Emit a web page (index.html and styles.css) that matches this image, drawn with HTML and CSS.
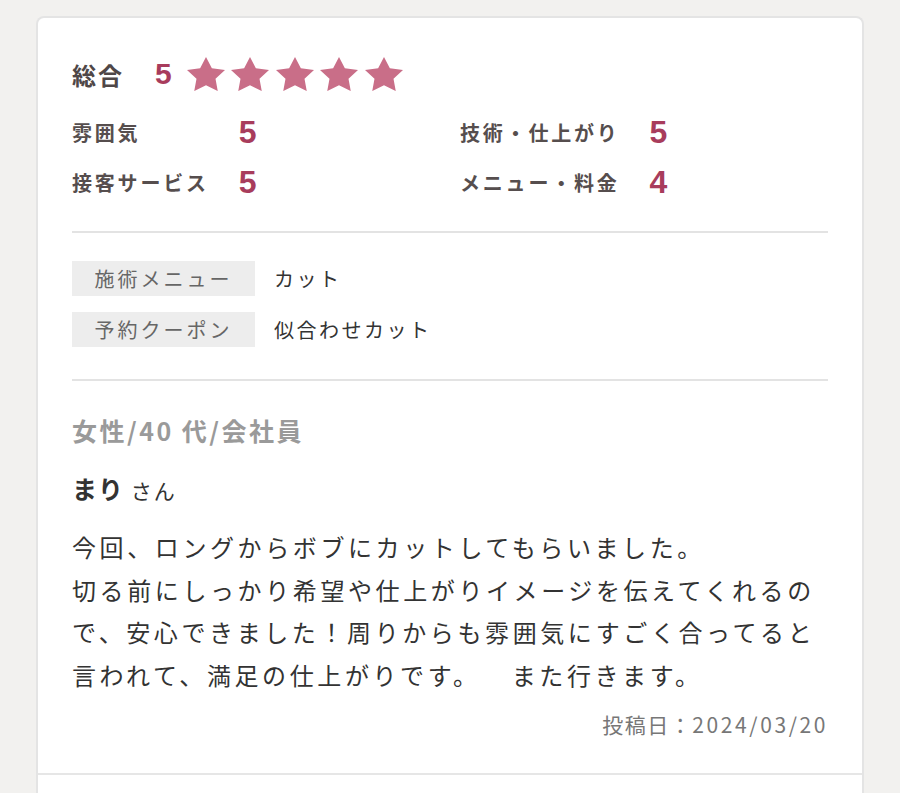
FILE: index.html
```html
<!DOCTYPE html>
<html lang="ja">
<head>
  <meta charset="UTF-8" />
  <meta name="viewport" content="width=device-width, initial-scale=1.0"/>
  <title>口コミ</title>
  <link rel="stylesheet" href="styles.css">
</head>
<body>
  <div class="review-list">
    <div class="review">
      <div class="ratings">
        <div class="overall">
          <span class="overall-label">総合</span>
          <span class="overall-score">5</span>
          <span class="stars">
            <svg class="star" viewBox="2 2 20 19" preserveAspectRatio="none"><path d="M12 2l3.09 6.26L22 9.27l-5 4.87 1.18 6.88L12 17.77l-6.18 3.25L7 14.14 2 9.27l6.91-1.01z"/></svg>
            <svg class="star" viewBox="2 2 20 19" preserveAspectRatio="none"><path d="M12 2l3.09 6.26L22 9.27l-5 4.87 1.18 6.88L12 17.77l-6.18 3.25L7 14.14 2 9.27l6.91-1.01z"/></svg>
            <svg class="star" viewBox="2 2 20 19" preserveAspectRatio="none"><path d="M12 2l3.09 6.26L22 9.27l-5 4.87 1.18 6.88L12 17.77l-6.18 3.25L7 14.14 2 9.27l6.91-1.01z"/></svg>
            <svg class="star" viewBox="2 2 20 19" preserveAspectRatio="none"><path d="M12 2l3.09 6.26L22 9.27l-5 4.87 1.18 6.88L12 17.77l-6.18 3.25L7 14.14 2 9.27l6.91-1.01z"/></svg>
            <svg class="star" viewBox="2 2 20 19" preserveAspectRatio="none"><path d="M12 2l3.09 6.26L22 9.27l-5 4.87 1.18 6.88L12 17.77l-6.18 3.25L7 14.14 2 9.27l6.91-1.01z"/></svg>
          </span>
        </div>
        <div class="scores">
          <div class="score-col left">
            <span class="score-label">雰囲気</span>
            <span class="score-value">5</span>
            <span class="score-label">接客サービス</span>
            <span class="score-value">5</span>
          </div>
          <div class="score-col">
            <span class="score-label">技術・仕上がり</span>
            <span class="score-value">5</span>
            <span class="score-label">メニュー・料金</span>
            <span class="score-value">4</span>
          </div>
        </div>
      </div>

      <div class="details">
        <div class="detail-row">
          <span class="detail-label">施術メニュー</span>
          <span class="detail-value">カット</span>
        </div>
        <div class="detail-row">
          <span class="detail-label">予約クーポン</span>
          <span class="detail-value">似合わせカット</span>
        </div>
      </div>

      <p class="profile">女性/40 代/会社員</p>
      <p class="author"><strong>まり</strong> さん</p>
      <p class="comment">今回、ロングからボブにカットしてもらいました。<br>切る前にしっかり希望や仕上がりイメージを伝えてくれるので、安心できました！周りからも雰囲気にすごく合ってると言われて、満足の仕上がりです。　&ensp;また行きます。</p>
      <p class="date">投稿日：<span class="date-num">2024/03/20</span></p>
    </div>
    <div class="review"></div>
  </div>
</body>
</html>
```

FILE: styles.css
```css
body {
  margin: 0;
  background: #f2f1ef;
  font-family: "Noto Sans CJK JP", sans-serif;
  color: #333;
}
p {
  margin: 0;
}
.review-list {
  margin: 16px 36px 0;
  background: white;
  border: 2px solid #e4e4e4;
  border-bottom: none;
  border-radius: 8px 8px 0 0;
}
.review {
  padding: 36px 34px 34px;
  border-bottom: 2px solid #e6e6e6;
}
.review:last-child {
  border-bottom: none;
  min-height: 40px;
}
.ratings {
  padding-bottom: 24px;
  border-bottom: 2px solid #e3e3e3;
}
.overall {
  display: flex;
  align-items: center;
  height: 40px;
}
.overall-label {
  font-size: 24px;
  font-weight: bold;
  letter-spacing: 2px;
  color: #4f4747;
}
.overall-score {
  margin-left: 31px;
  font-family: "Liberation Sans", sans-serif;
  font-size: 30px;
  font-weight: 600;
  color: #a83c5c;
}
.stars {
  display: flex;
  gap: 6.5px;
  margin-left: 15px;
}
.star {
  width: 38px;
  height: 34px;
  fill: #c96e88;
}
.scores {
  display: flex;
  margin-top: 13px;
}
.score-col {
  display: grid;
  grid-template-columns: max-content auto;
  column-gap: 30px;
  grid-auto-rows: 50px;
  align-items: center;
}
.score-col.left {
  width: 388px;
}
.score-label {
  font-size: 20px;
  font-weight: bold;
  letter-spacing: 2.8px;
  color: #564e4e;
}
.score-value {
  font-family: "Liberation Sans", sans-serif;
  font-size: 32px;
  font-weight: 600;
  color: #a83c5c;
}
.details {
  display: flex;
  flex-direction: column;
  gap: 16px;
  padding: 28px 0 32px;
  border-bottom: 2px solid #e3e3e3;
}
.detail-row {
  display: flex;
  align-items: center;
}
.detail-label {
  width: 183px;
  height: 35px;
  line-height: 35px;
  text-align: center;
  background: #ededed;
  font-size: 20px;
  letter-spacing: 3px;
  color: #666;
}
.detail-value {
  margin-left: 19px;
  font-size: 20px;
  letter-spacing: 2.5px;
  color: #333;
}
.profile {
  margin-top: 31px;
  font-size: 25px;
  line-height: 36px;
  font-weight: bold;
  letter-spacing: 2.5px;
  color: #9a9a9a;
}
.author {
  margin-top: 22px;
  font-size: 21px;
  line-height: 36px;
  letter-spacing: 2px;
}
.author strong {
  font-size: 25px;
  letter-spacing: 1px;
}
.comment {
  margin-top: 18px;
  font-size: 24px;
  line-height: 42.5px;
  letter-spacing: 3.6px;
  color: #333;
}
.date {
  margin-top: 13px;
  text-align: right;
  font-size: 21px;
  line-height: 30px;
  letter-spacing: 1.5px;
  color: #777;
}
.date-num {
  letter-spacing: 2.6px;
}
```
